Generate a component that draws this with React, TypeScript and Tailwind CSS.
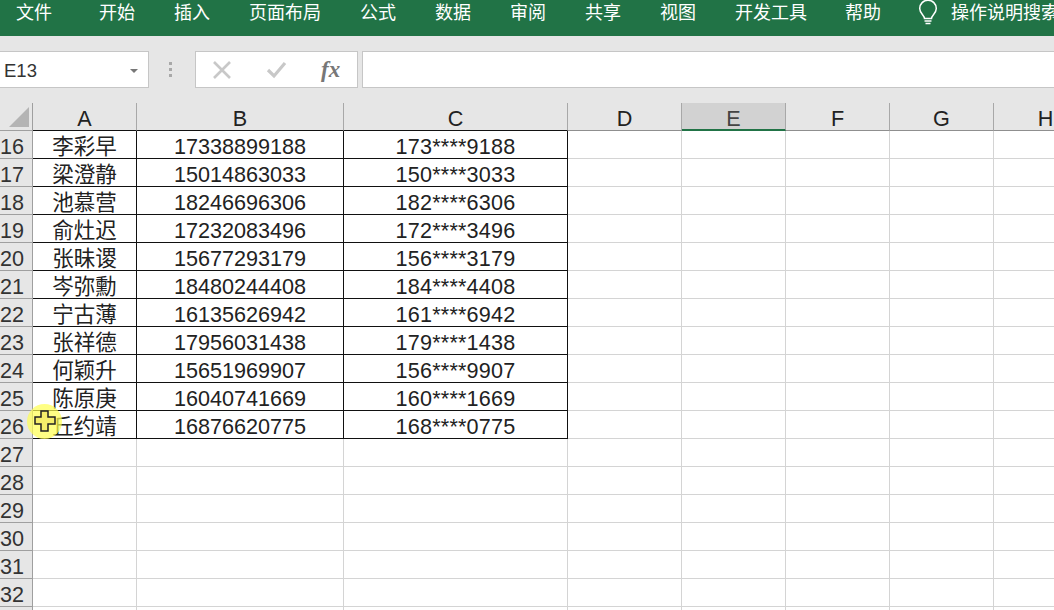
const tabs = [
  { label: '文件', gap: 'ml-[16px]' },
  { label: '开始', gap: 'ml-[47px]' },
  { label: '插入', gap: 'ml-[39px]' },
  { label: '页面布局', gap: 'ml-[39px]' },
  { label: '公式', gap: 'ml-[39px]' },
  { label: '数据', gap: 'ml-[39px]' },
  { label: '审阅', gap: 'ml-[39px]' },
  { label: '共享', gap: 'ml-[39px]' },
  { label: '视图', gap: 'ml-[39px]' },
  { label: '开发工具', gap: 'ml-[39px]' },
  { label: '帮助', gap: 'ml-[38px]' },
];

const columns = [
  { name: 'A', width: 'w-[104px]' },
  { name: 'B', width: 'w-[207px]' },
  { name: 'C', width: 'w-[224px]' },
  { name: 'D', width: 'w-[114px]' },
  { name: 'E', width: 'w-[104px]' },
  { name: 'F', width: 'w-[104px]' },
  { name: 'G', width: 'w-[104px]' },
  { name: 'H', width: 'w-[104px]' },
];

const people = [
  ['李彩早', '17338899188', '173****9188'],
  ['梁澄静', '15014863033', '150****3033'],
  ['池慕营', '18246696306', '182****6306'],
  ['俞灶迟', '17232083496', '172****3496'],
  ['张昧谡', '15677293179', '156****3179'],
  ['岑弥勳', '18480244408', '184****4408'],
  ['宁古薄', '16135626942', '161****6942'],
  ['张祥德', '17956031438', '179****1438'],
  ['何颖升', '15651969907', '156****9907'],
  ['陈原庚', '16040741669', '160****1669'],
  ['丘约靖', '16876620775', '168****0775'],
];

// the last row only shows its top edge, so it has no number
const rowNumbers = [16, 17, 18, 19, 20, 21, 22, 23, 24, 25, 26, 27, 28, 29, 30, 31, 32, null];

function Bulb() {
  return (
    <svg width="20" height="26" viewBox="0 0 20 26" fill="none" stroke="#ffffff" strokeWidth="1.5">
      <path d="M6.5 18.5c0-3-4.8-5-4.8-10a8.3 8.3 0 0 1 16.6 0c0 5-4.8 7-4.8 10z" />
      <path d="M6.5 21h7M7.5 23.5h5" />
    </svg>
  );
}

function Row({ n, person }: { n: number | null; person?: string[] }) {
  return (
    <div className="flex h-[28px] shrink-0">
      <div className="w-[33px] shrink-0 overflow-hidden border-r border-b border-[#9f9f9f] bg-[#e6e6e6] text-[21.6px] leading-[32px] text-[#333]">
        {n}
      </div>
      {columns.map((col, i) => {
        const value = person && i < 3 ? person[i] : '';
        const inTable = !!person && i < 3;
        return (
          <div
            key={col.name}
            className={`${col.width} shrink-0 border-r border-b text-center leading-[32px] text-[#222] ${
              inTable ? 'border-[#111]' : 'border-[#d4d4d4]'
            } ${i === 0 ? 'text-[21.5px]' : 'text-[21.6px]'} ${i === 2 ? 'tracking-[0.2px]' : ''}`}
          >
            {value}
          </div>
        );
      })}
    </div>
  );
}

export default function App() {
  return (
    <div className="relative h-[610px] w-[1054px] overflow-hidden bg-white font-['Liberation_Sans','Noto_Sans_CJK_SC',sans-serif]">
      <div className="flex h-[36px] items-start whitespace-nowrap bg-[#217346] text-[18px] leading-[27px] text-white">
        {tabs.map((t) => (
          <span key={t.label} className={t.gap}>
            {t.label}
          </span>
        ))}
        <span className="ml-[37px]">
          <Bulb />
        </span>
        <span className="ml-[13px]">操作说明搜索</span>
      </div>

      <div className="h-[15px] bg-[#e6e6e6]" />

      <div className="flex h-[37px] items-stretch bg-[#e6e6e6]">
        <div className="flex w-[149px] items-center justify-between border-y border-r border-[#c6c6c6] bg-white pl-[4px] pr-[10px] pt-[2px] text-[18.5px] text-[#333]">
          <span>E13</span>
          <span className="h-0 w-0 border-x-[4px] border-t-[4px] border-x-transparent border-t-[#777]" />
        </div>
        <div className="flex w-[46px] flex-col items-start justify-center gap-[3px] pl-[20px]">
          <span className="h-[3px] w-[3px] bg-[#a8a8a8]" />
          <span className="h-[3px] w-[3px] bg-[#a8a8a8]" />
          <span className="h-[3px] w-[3px] bg-[#a8a8a8]" />
        </div>
        <div className="flex w-[163px] items-center border border-[#c6c6c6] bg-white">
          <svg className="ml-[16px]" width="20" height="18" viewBox="0 0 20 18" fill="none" stroke="#c8c8c8" strokeWidth="2.6">
            <path d="M2 1l16 16M18 1L2 17" />
          </svg>
          <svg className="ml-[34px]" width="21" height="18" viewBox="0 0 21 18" fill="none" stroke="#c8c8c8" strokeWidth="3.2">
            <path d="M2 9l6 6L19 2" />
          </svg>
          <span className="ml-[34px] font-['Liberation_Serif',serif] text-[23px] font-bold italic leading-none text-[#777]">
            fx
          </span>
        </div>
        <div className="ml-[4px] flex-1 border-y border-l border-[#c6c6c6] bg-white" />
      </div>

      <div className="h-[15px] bg-[#e6e6e6]" />

      <div className="flex h-[28px] bg-[#e6e6e6]">
        <div className="flex w-[33px] shrink-0 items-end justify-end border-r border-b border-[#9f9f9f] pb-[3px] pr-[3px]">
          <span className="h-0 w-0 border-b-[20px] border-l-[20px] border-b-[#b4b4b4] border-l-transparent" />
        </div>
        {columns.map((col, i) => (
          <div
            key={col.name}
            className={`${col.width} shrink-0 border-r text-center text-[21.6px] leading-[31px] ${
              col.name === 'E'
                ? 'border-b-2 border-r-[#a8a8a8] border-b-[#217346] bg-[#d2d2d2] text-[#444]'
                : `border-b border-[#a8a8a8] ${i < 3 ? 'border-b-[#111]' : 'border-b-[#8f8f8f]'} text-[#222]`
            }`}
          >
            {col.name}
          </div>
        ))}
      </div>

      {rowNumbers.map((n, i) => (
        <Row key={i} n={n} person={people[i]} />
      ))}

      <div className="absolute left-[27px] top-[404px] h-[35px] w-[35px] rounded-full bg-[#ffff50]/70" />
      <svg className="absolute left-[34px] top-[410px]" width="22" height="22" viewBox="0 0 22 22">
        <path d="M7 1h7v6h7v7h-7v7H7v-7H1V7h6z" fill="#f5ee6a" stroke="#222" strokeWidth="1.5" />
      </svg>
    </div>
  );
}
